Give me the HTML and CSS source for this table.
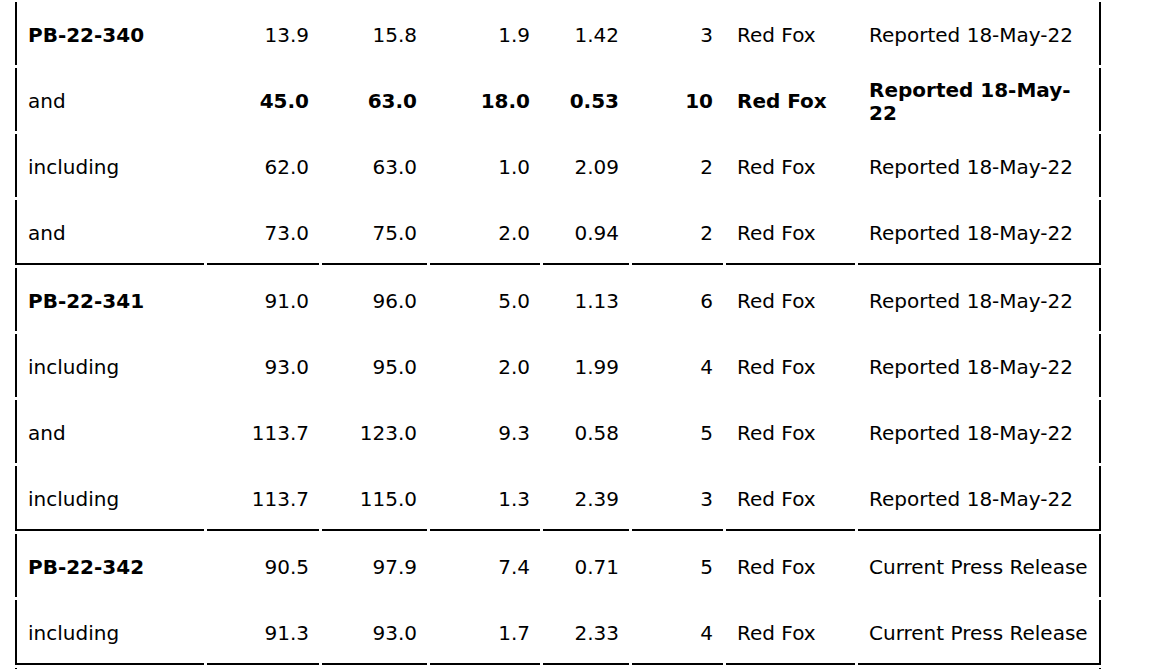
FILE: index.html
```html
<!DOCTYPE html>
<html>
<head>
<meta charset="utf-8">
<link rel="stylesheet" href="styles.css">
</head>
<body>
<table class="results">
  <colgroup>
    <col class="c1"><col class="c2"><col class="c3"><col class="c4"><col class="c5"><col class="c6"><col class="c7"><col class="c8">
  </colgroup>
  <tbody>
    <tr>
      <td class="hole"><b>PB-22-340</b></td><td class="num">13.9</td><td class="num">15.8</td><td class="num">1.9</td><td class="num">1.42</td><td class="num">3</td><td class="txt">Red Fox</td><td class="txt src">Reported 18-May-22</td>
    </tr>
    <tr class="strong">
      <td class="hole">and</td><td class="num">45.0</td><td class="num">63.0</td><td class="num">18.0</td><td class="num">0.53</td><td class="num">10</td><td class="txt">Red Fox</td><td class="txt src">Reported 18-May-22</td>
    </tr>
    <tr>
      <td class="hole">including</td><td class="num">62.0</td><td class="num">63.0</td><td class="num">1.0</td><td class="num">2.09</td><td class="num">2</td><td class="txt">Red Fox</td><td class="txt src">Reported 18-May-22</td>
    </tr>
    <tr class="end">
      <td class="hole">and</td><td class="num">73.0</td><td class="num">75.0</td><td class="num">2.0</td><td class="num">0.94</td><td class="num">2</td><td class="txt">Red Fox</td><td class="txt src">Reported 18-May-22</td>
    </tr>
    <tr>
      <td class="hole"><b>PB-22-341</b></td><td class="num">91.0</td><td class="num">96.0</td><td class="num">5.0</td><td class="num">1.13</td><td class="num">6</td><td class="txt">Red Fox</td><td class="txt src">Reported 18-May-22</td>
    </tr>
    <tr>
      <td class="hole">including</td><td class="num">93.0</td><td class="num">95.0</td><td class="num">2.0</td><td class="num">1.99</td><td class="num">4</td><td class="txt">Red Fox</td><td class="txt src">Reported 18-May-22</td>
    </tr>
    <tr>
      <td class="hole">and</td><td class="num">113.7</td><td class="num">123.0</td><td class="num">9.3</td><td class="num">0.58</td><td class="num">5</td><td class="txt">Red Fox</td><td class="txt src">Reported 18-May-22</td>
    </tr>
    <tr class="end">
      <td class="hole">including</td><td class="num">113.7</td><td class="num">115.0</td><td class="num">1.3</td><td class="num">2.39</td><td class="num">3</td><td class="txt">Red Fox</td><td class="txt src">Reported 18-May-22</td>
    </tr>
    <tr>
      <td class="hole"><b>PB-22-342</b></td><td class="num">90.5</td><td class="num">97.9</td><td class="num">7.4</td><td class="num">0.71</td><td class="num">5</td><td class="txt">Red Fox</td><td class="txt src">Current Press Release</td>
    </tr>
    <tr class="end">
      <td class="hole">including</td><td class="num">91.3</td><td class="num">93.0</td><td class="num">1.7</td><td class="num">2.33</td><td class="num">4</td><td class="txt">Red Fox</td><td class="txt src">Current Press Release</td>
    </tr>
    <tr>
      <td class="hole">&nbsp;</td><td class="num">&nbsp;</td><td class="num">&nbsp;</td><td class="num">&nbsp;</td><td class="num">&nbsp;</td><td class="num">&nbsp;</td><td class="txt">&nbsp;</td><td class="txt src">&nbsp;</td>
    </tr>
  </tbody>
</table>
</body>
</html>
```

FILE: styles.css
```css
html, body {
  margin: 0;
  padding: 0;
  background: #ffffff;
}

body {
  font-family: "DejaVu Sans", Verdana, sans-serif;
  font-size: 20px;
  line-height: 23px;
  color: #000000;
  overflow: hidden;
}

.results {
  table-layout: fixed;
  border-collapse: separate;
  border-spacing: 3px;
  width: 1092px;
  margin: -1px 0 0 12px;
}

.c1 { width: 189px; }
.c2 { width: 112px; }
.c3 { width: 105px; }
.c4 { width: 110px; }
.c5 { width: 86px; }
.c6 { width: 91px; }
.c7 { width: 129px; }
.c8 { width: 243px; }

.results td {
  height: 63px;
  padding: 4px 10px 0 10px;
  vertical-align: middle;
  box-sizing: border-box;
}

.results .hole {
  border-left: 2px solid #000000;
  padding-left: 11px;
}

.results .src {
  border-right: 2px solid #000000;
}

.results .num {
  text-align: right;
}

.results .txt {
  text-align: left;
  padding-left: 11px;
}

.results .src {
  padding-left: 11px;
  padding-right: 8px;
}

.strong td {
  font-weight: bold;
}

.strong td.hole {
  font-weight: normal;
}

.end td {
  height: 65px;
  border-bottom: 2px solid #000000;
}
```
